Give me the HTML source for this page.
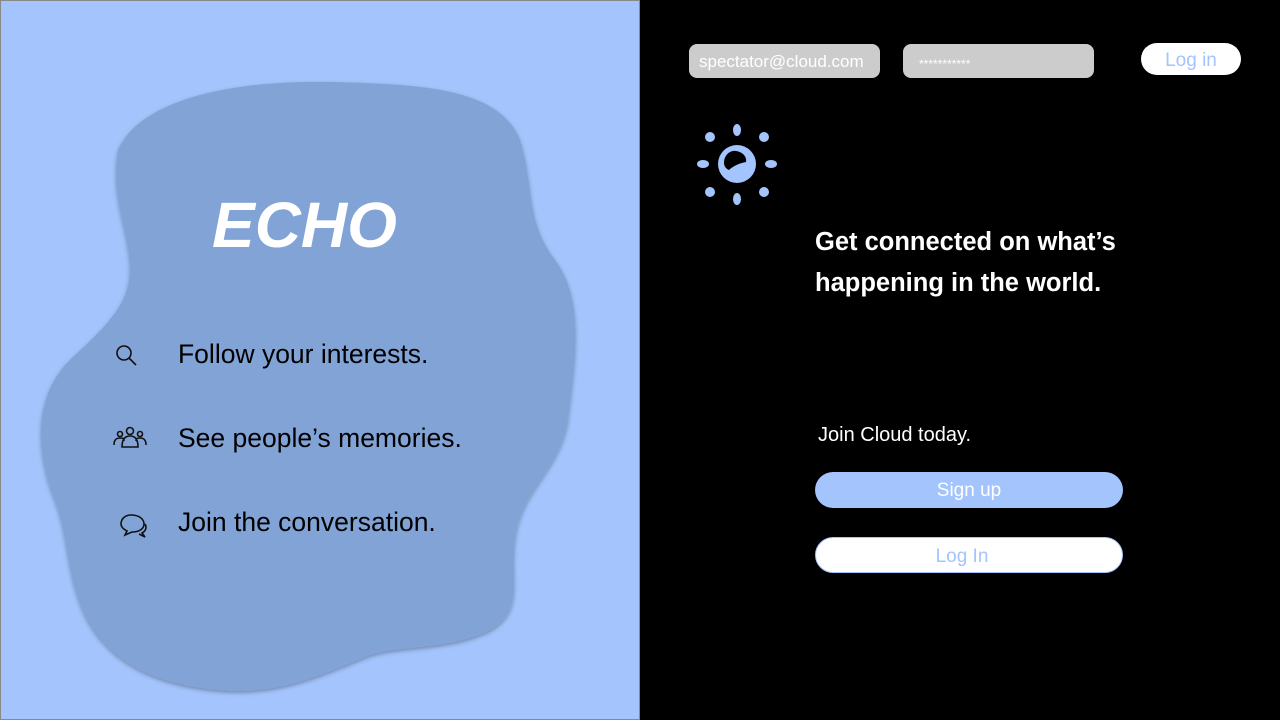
<!DOCTYPE html>
<html><head><style>
body{margin:0;width:1280px;height:720px;overflow:hidden;background:#000;font-family:"Liberation Sans",sans-serif;position:relative}
.left{position:absolute;left:0;top:0;width:638px;height:718px;background:#a3c4fc;border:1px solid #888;}
.t{position:absolute;white-space:nowrap}
</style></head><body>
<div class="left"></div>
<svg style="position:absolute;left:0;top:0" width="640" height="720">
<defs><filter id="s" x="-10%" y="-10%" width="120%" height="120%"><feDropShadow dx="0" dy="2" stdDeviation="2" flood-opacity="0.3"/></filter></defs>
<path filter="url(#s)" fill="#82a3d6" d="M118,150 C140,100 230,80 330,82 C430,84 500,90 520,140 C535,190 525,220 555,260 C585,300 575,360 568,420 C560,470 520,490 515,540 C510,580 525,610 490,630 C450,650 400,645 370,655 C320,675 280,695 220,690 C160,685 110,665 85,615 C65,570 70,540 55,500 C35,450 35,400 65,365 C95,335 130,310 130,270 C130,230 110,200 118,150 Z"/>
<g fill="none" stroke="#111" stroke-width="1.6">
<circle cx="124" cy="353" r="7"/><line x1="129" y1="358" x2="136" y2="365"/>
<circle cx="130" cy="431" r="3.5"/><path d="M122,447 c0,-8 3,-11 8,-11 s8,3 8,11z"/>
<circle cx="120" cy="434" r="2.5"/><path d="M114,445 c0,-5 2,-7 6,-7 s4,1 4,3"/>
<circle cx="140" cy="434" r="2.5"/><path d="M146,445 c0,-5 -2,-7 -6,-7 s-4,1 -4,3"/>
<path d="M131,515 c8,0 13,4 13,9 s-5,8 -12,8 l-7,3 l2,-4 c-4,-2 -6,-4 -6,-7 c0,-5 4,-9 10,-9z"/>
<path d="M145,524 c2,3 1,7 -3,9 l3,4 l-6,-3"/>
</g>
</svg>
<div class="t" style="left:212px;top:188px;font-size:64px;font-weight:bold;font-style:italic;color:#fff">ECHO</div>
<div class="t" style="left:178px;top:339px;font-size:26.5px;color:#000">Follow your interests.</div>
<div class="t" style="left:178px;top:423px;font-size:26.5px;color:#000">See people’s memories.</div>
<div class="t" style="left:178px;top:507px;font-size:26.5px;color:#000">Join the conversation.</div>

<div class="t" style="left:689px;top:44px;width:191px;height:34px;background:#ccc;border-radius:8px;color:#fff;font-size:17px;line-height:36px;text-indent:10px">spectator@cloud.com</div>
<div class="t" style="left:903px;top:44px;width:191px;height:34px;background:#ccc;border-radius:8px;color:#fff;font-size:12px;line-height:40px;text-indent:16px">***********</div>
<div class="t" style="left:1141px;top:43px;width:100px;height:32px;background:#fff;border-radius:17px;color:#a3c4fc;font-size:19px;line-height:36px;text-align:center">Log in</div>

<svg style="position:absolute;left:690px;top:120px" width="95" height="90" fill="#a3c4fc">
<path fill-rule="evenodd" d="M47,44 m-19,0 a19,19 0 1 0 38,0 a19,19 0 1 0 -38,0z M34,43 c0,-8 6,-13 12,-12 c7,1 11,6 10,11 c-6,1 -13,4 -17,8 c-3,-1 -5,-4 -5,-7z"/>
<ellipse cx="47" cy="10" rx="4" ry="6"/><ellipse cx="47" cy="79" rx="4" ry="6"/>
<ellipse cx="13" cy="44" rx="6" ry="4"/><ellipse cx="81" cy="44" rx="6" ry="4"/>
<circle cx="20" cy="17" r="5"/><circle cx="74" cy="17" r="5"/><circle cx="20" cy="72" r="5"/><circle cx="74" cy="72" r="5"/>
</svg>

<div class="t" style="left:815px;top:222px;font-size:25.5px;font-weight:bold;color:#fff;line-height:41px">Get connected on what’s<br>happening in the world.</div>
<div class="t" style="left:818px;top:424px;font-size:20px;color:#fff">Join Cloud today.</div>
<div class="t" style="left:815px;top:472px;width:308px;height:36px;background:#a3c4fc;border-radius:18px;color:#fff;font-size:19px;line-height:38px;text-align:center">Sign up</div>
<div class="t" style="left:815px;top:537px;width:306px;height:34px;background:#fff;border:1px solid #a3c4fc;border-radius:18px;color:#a3c4fc;font-size:19px;line-height:38px;text-align:center;text-indent:-14px">Log In</div>
</body></html>
